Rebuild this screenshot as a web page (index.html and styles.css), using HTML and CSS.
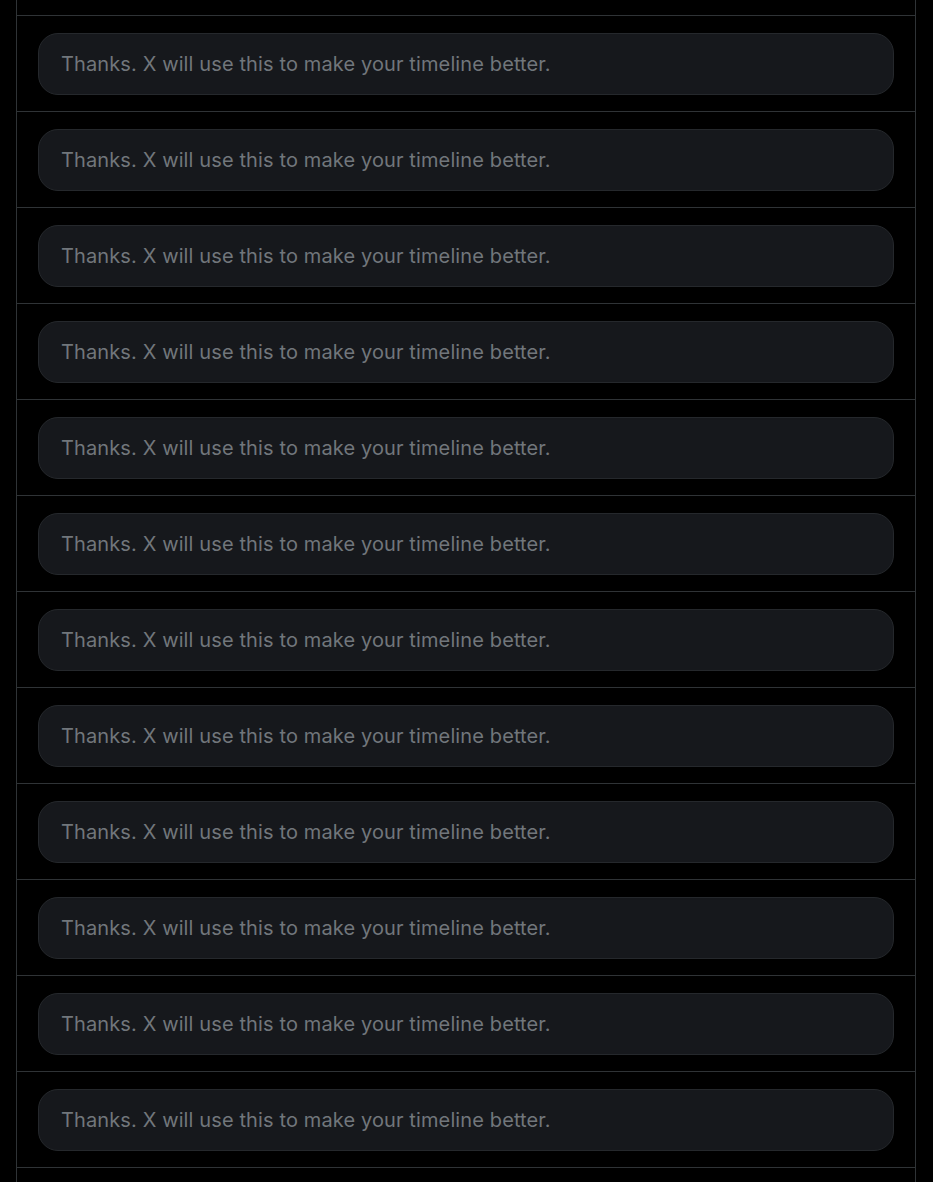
FILE: index.html
```html
<!DOCTYPE html>
<html lang="en">
<head>
<meta charset="utf-8">
<title>Timeline</title>
<link rel="stylesheet" href="styles.css">
</head>
<body>
<main class="column">
  <div class="row-partial"></div>
  <div class="row"><div class="notice">Thanks. X will use this to make your timeline better.</div></div>
  <div class="row"><div class="notice">Thanks. X will use this to make your timeline better.</div></div>
  <div class="row"><div class="notice">Thanks. X will use this to make your timeline better.</div></div>
  <div class="row"><div class="notice">Thanks. X will use this to make your timeline better.</div></div>
  <div class="row"><div class="notice">Thanks. X will use this to make your timeline better.</div></div>
  <div class="row"><div class="notice">Thanks. X will use this to make your timeline better.</div></div>
  <div class="row"><div class="notice">Thanks. X will use this to make your timeline better.</div></div>
  <div class="row"><div class="notice">Thanks. X will use this to make your timeline better.</div></div>
  <div class="row"><div class="notice">Thanks. X will use this to make your timeline better.</div></div>
  <div class="row"><div class="notice">Thanks. X will use this to make your timeline better.</div></div>
  <div class="row"><div class="notice">Thanks. X will use this to make your timeline better.</div></div>
  <div class="row"><div class="notice">Thanks. X will use this to make your timeline better.</div></div>
  <div class="row-end"></div>
</main>
</body>
</html>
```
FILE: styles.css
```css
html, body {
  margin: 0;
  padding: 0;
  background: #000000;
}
body {
  font-family: "Inter", "Noto Sans", "Liberation Sans", sans-serif;
  overflow: hidden;
  height: 1182px;
}
.column {
  width: 898px;
  margin-left: 16px;
  border-left: 1px solid #2f3336;
  border-right: 1px solid #2f3336;
  height: 1182px;
}
.row-partial {
  height: 15px;
}
.row {
  border-top: 1px solid #2f3336;
  padding: 17px 21px 16px 21px;
}
.row-end {
  border-top: 1px solid #2f3336;
  height: 14px;
}
.notice {
  box-sizing: border-box;
  height: 62px;
  display: flex;
  align-items: center;
  padding: 0 22px;
  background: #16181c;
  border: 1px solid #25282c;
  border-radius: 20px;
  color: #71767b;
  font-size: 20px;
  letter-spacing: 0.12px;
}
```
